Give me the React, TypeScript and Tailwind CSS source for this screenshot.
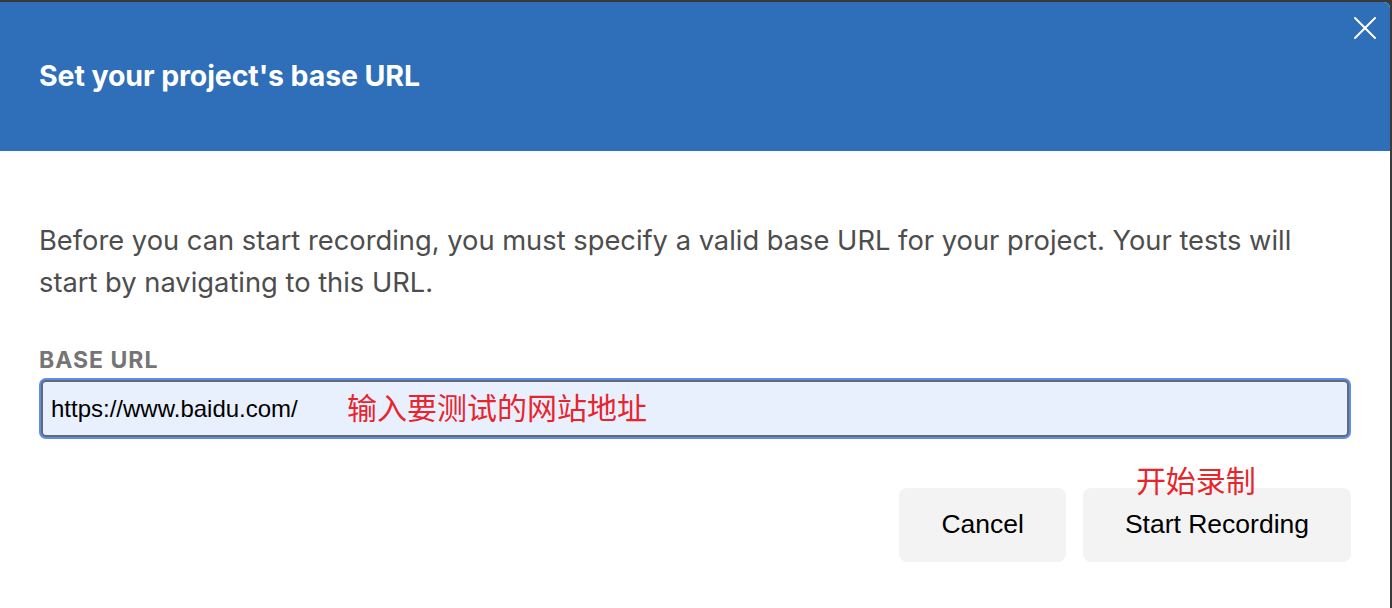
import { useState } from "react";

const CloseIcon = () => (
  <svg width="22" height="22" viewBox="0 0 22 22" fill="none" stroke="currentColor" strokeWidth="2" strokeLinecap="round">
    <path d="M1 1L21 21M21 1L1 21" />
  </svg>
);

const App = () => {
  const [url, setUrl] = useState("https://www.baidu.com/");

  return (
    <div className="h-[608px] w-full bg-[#3a3a3a] pt-[2px] pr-[2px] font-['Inter',sans-serif]">
      <div className="flex h-full flex-col overflow-hidden rounded-tr-[6px] bg-white">
        {/* Header */}
        <div className="relative flex h-[149px] shrink-0 items-center bg-[#2f6eb8] px-[39px]">
          <h1 className="text-[28.5px] font-bold tracking-[-0.1px] text-white">Set your project's base URL</h1>
          <button className="absolute right-[14px] top-[15px] text-white">
            <CloseIcon />
          </button>
        </div>

        {/* Body */}
        <div className="flex flex-col px-[39px] pt-[69px]">
          <p className="text-[27.3px] leading-[42px] text-[#4d4d4d]">
            Before you can start recording, you must specify a valid base URL for your project. Your tests will start by navigating to this URL.
          </p>

          <label className="mt-[42px] text-[23px] font-bold leading-[28px] tracking-[1px] text-[#757575]">BASE URL</label>

          <div className="relative mt-[4px] p-[2px]">
            <input
              value={url}
              onChange={(e) => setUrl(e.target.value)}
              className="h-[57px] w-full rounded-[5px] border-2 border-[#666a70] bg-[#e8f0fe] px-[8px] font-['Liberation_Sans',Arial,sans-serif] text-[24px] text-black outline-none ring-2 ring-[#5b8dee]"
            />
            {/* annotation */}
            <span className="pointer-events-none absolute left-[308px] top-[10px] font-['Noto_Sans_CJK_SC',sans-serif] text-[30px] leading-[36px] text-[#e8242c]">
              输入要测试的网站地址
            </span>
          </div>

          <div className="mt-[49px] flex justify-end gap-[17px]">
            <button className="h-[74px] rounded-[8px] bg-[#f3f3f3] px-[42px] font-['Liberation_Sans',Arial,sans-serif] text-[26.5px] text-black">
              Cancel
            </button>
            <div className="relative">
              <button className="h-[74px] rounded-[8px] bg-[#f3f3f3] px-[42px] font-['Liberation_Sans',Arial,sans-serif] text-[26.5px] text-black">
                Start Recording
              </button>
              <span className="pointer-events-none absolute left-[53px] top-[-27px] font-['Noto_Sans_CJK_SC',sans-serif] text-[30px] leading-[36px] text-[#e8242c]">
                开始录制
              </span>
            </div>
          </div>
        </div>
      </div>
    </div>
  );
};

export default App;
